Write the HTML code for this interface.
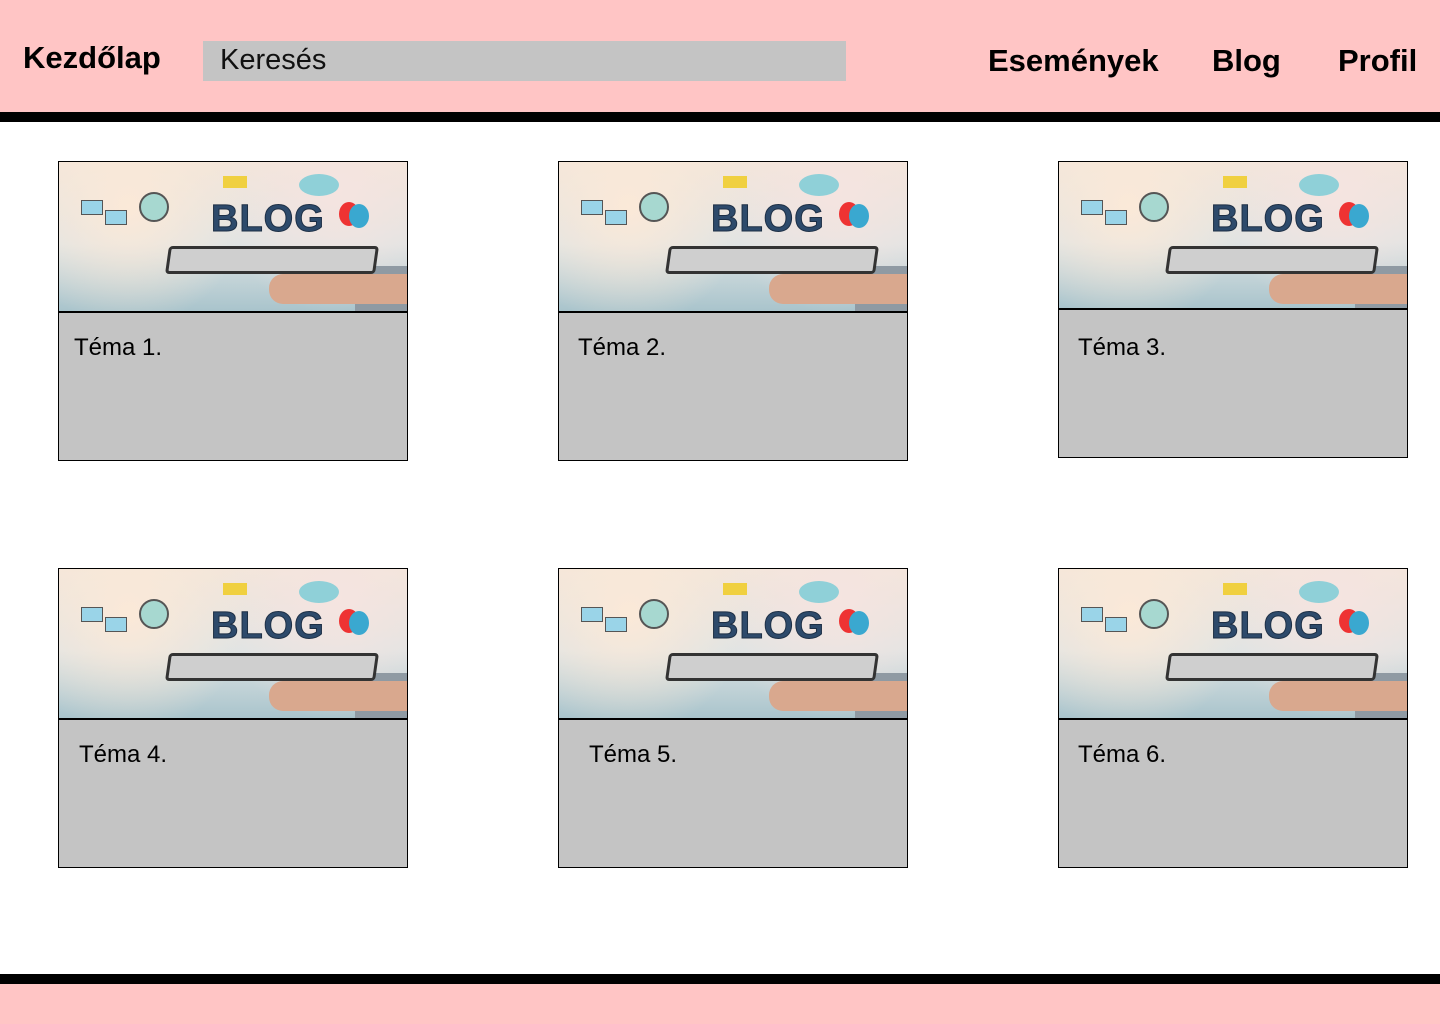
<!DOCTYPE html>
<html><head><meta charset="utf-8"><style>
body{margin:0;width:1440px;height:1024px;position:relative;background:#fff;font-family:"Liberation Sans",sans-serif;overflow:hidden}
.hdr{position:absolute;left:0;top:0;width:1440px;height:112px;background:#ffc5c5}
.bar{position:absolute;left:0;width:1440px;height:10px;background:#000}
.nav{position:absolute;font-weight:bold;font-size:31px;color:#000}
.search{position:absolute;left:203px;top:41px;width:643px;height:40px;background:#c4c4c4;font-size:29px;line-height:38px;box-sizing:border-box;padding-left:17px;color:#111}
.card{position:absolute;width:350px;height:300px;border:1px solid #000;box-sizing:border-box;background:#c4c4c4}
.img{position:absolute;left:0;top:0;width:348px;height:149px;border-bottom:2px solid #000;overflow:hidden;
background:radial-gradient(circle at 20% 30%,#fbe9d8 0,transparent 40%),radial-gradient(circle at 80% 20%,#f5e4e0 0,transparent 40%),linear-gradient(180deg,#f3e6da 0%,#dfe4e4 55%,#a9c4cc 100%)}
.blog{position:absolute;left:152px;top:36px;font-weight:bold;font-size:38px;color:#2d4a6b;letter-spacing:1px;-webkit-text-stroke:1px #1d2f45}
.tab{position:absolute;left:108px;top:84px;width:204px;height:22px;background:#cfcfcf;border:3px solid #333;border-radius:4px;transform:skewX(-8deg)}
.hand{position:absolute;left:210px;top:112px;width:140px;height:30px;background:#d9a88e;border-radius:14px 0 0 14px}
.sleeve{position:absolute;left:296px;top:104px;width:60px;height:46px;background:#8f9aa3}
.ic{position:absolute;border-radius:50%}
.t{position:absolute;top:170px;font-size:24px;color:#000}
</style></head><body>
<div class="hdr"></div>
<div class="bar" style="top:112px"></div>
<div class="nav" style="left:23px;top:40px">Kezdőlap</div>
<div class="search">Keresés</div>
<div class="nav" style="left:988px;top:43px">Események</div>
<div class="nav" style="left:1212px;top:43px">Blog</div>
<div class="nav" style="left:1338px;top:43px">Profil</div>

<div id="cards"></div>
<div class="bar" style="top:974px"></div>
<div style="position:absolute;left:0;top:984px;width:1440px;height:40px;background:#ffc5c5"></div>
<script>
var cs=[[58,161,"Téma 1.",16],[558,161,"Téma 2.",20],[1058,161,"Téma 3.",20],[58,568,"Téma 4.",21],[558,568,"Téma 5.",31],[1058,568,"Téma 6.",20]];
var h="";
cs.forEach(function(c,i){
var hh=i==2?297:300;
h+='<div class="card" style="left:'+c[0]+'px;top:'+c[1]+'px;height:'+hh+'px"><div class="img" style="height:'+(i==2?146:149)+'px">'+
'<div class="ic" style="left:80px;top:30px;width:26px;height:26px;background:#a7d8d0;border:2px solid #555"></div>'+
'<div class="ic" style="left:280px;top:40px;width:20px;height:24px;background:#e33"></div>'+
'<div class="ic" style="left:290px;top:42px;width:20px;height:24px;background:#3aa8d0"></div>'+
'<div class="ic" style="left:240px;top:12px;width:40px;height:22px;background:#8fd0d8"></div>'+
'<div style="position:absolute;left:22px;top:38px;width:20px;height:13px;background:#9ad4e8;border:1px solid #555"></div>'+
'<div style="position:absolute;left:46px;top:48px;width:20px;height:13px;background:#9ad4e8;border:1px solid #555"></div>'+
'<div style="position:absolute;left:164px;top:14px;width:24px;height:12px;background:#f0d040"></div>'+
'<div class="blog">BLOG</div><div class="sleeve"></div><div class="hand"></div><div class="tab"></div></div>'+
'<div class="t" style="left:'+(c[3]-1)+'px;top:172px">'+c[2]+'</div></div>';
});
document.getElementById("cards").innerHTML=h;
</script>
</body></html>
